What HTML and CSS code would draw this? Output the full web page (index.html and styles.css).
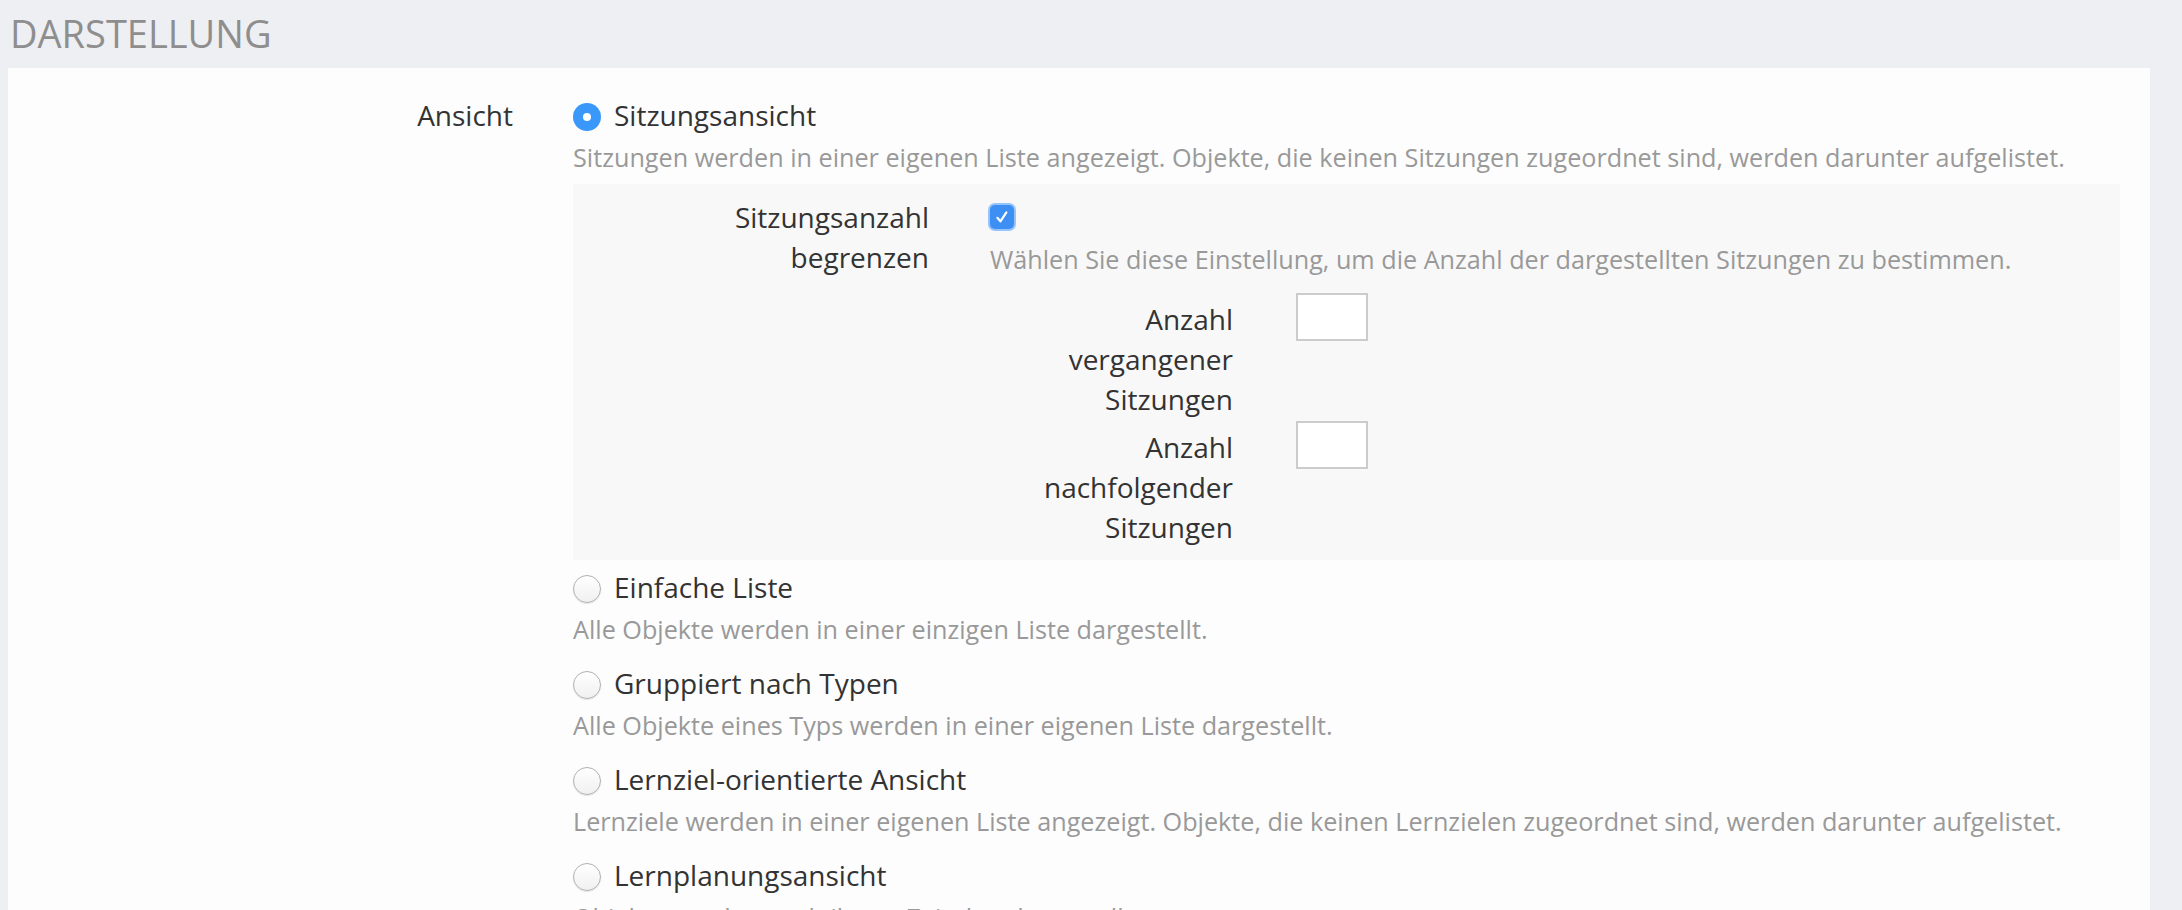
FILE: index.html
```html
<!DOCTYPE html>
<html lang="de">
<head>
<meta charset="utf-8">
<title>Darstellung</title>
<link rel="stylesheet" href="styles.css">
</head>
<body>
<h2 class="section-title">DARSTELLUNG</h2>
<div class="card">
  <div class="form-row">
    <div class="form-label">Ansicht</div>
    <div class="form-controls">
      <div class="option option--expanded">
        <div class="option-head"><span class="radio radio--checked"></span><span class="option-text">Sitzungsansicht</span></div>
        <div class="help">Sitzungen werden in einer eigenen Liste angezeigt. Objekte, die keinen Sitzungen zugeordnet sind, werden darunter aufgelistet.</div>
        <div class="subpanel">
          <div class="sub-label">Sitzungsanzahl begrenzen</div>
          <div class="sub-control">
            <div class="check-line"><span class="checkbox"><svg viewBox="0 0 24 24" width="24" height="24"><path d="M7.4 12.8 L10.4 16.4 L16.4 7.4" fill="none" stroke="#fff" stroke-width="2.2" stroke-linecap="round" stroke-linejoin="round"/></svg></span></div>
            <div class="help">Wählen Sie diese Einstellung, um die Anzahl der dargestellten Sitzungen zu bestimmen.</div>
            <div class="fields">
              <div class="field-label">Anzahl vergangener Sitzungen</div>
              <div class="field-input"><span class="text-input"></span></div>
              <div class="field-label">Anzahl nachfolgender Sitzungen</div>
              <div class="field-input"><span class="text-input"></span></div>
            </div>
          </div>
        </div>
      </div>
      <div class="option">
        <div class="option-head"><span class="radio"></span><span class="option-text">Einfache Liste</span></div>
        <div class="help">Alle Objekte werden in einer einzigen Liste dargestellt.</div>
      </div>
      <div class="option">
        <div class="option-head"><span class="radio"></span><span class="option-text">Gruppiert nach Typen</span></div>
        <div class="help">Alle Objekte eines Typs werden in einer eigenen Liste dargestellt.</div>
      </div>
      <div class="option">
        <div class="option-head"><span class="radio"></span><span class="option-text">Lernziel-orientierte Ansicht</span></div>
        <div class="help">Lernziele werden in einer eigenen Liste angezeigt. Objekte, die keinen Lernzielen zugeordnet sind, werden darunter aufgelistet.</div>
      </div>
      <div class="option">
        <div class="option-head"><span class="radio"></span><span class="option-text">Lernplanungsansicht</span></div>
        <div class="help">Objekte werden nach ihrem Zeitplan dargestellt.</div>
      </div>
    </div>
  </div>
</div>
</body>
</html>
```

FILE: styles.css
```css
html, body {
  margin: 0;
  padding: 0;
}
body {
  background: #eeeff3;
  font-family: "Open Sans", "Noto Sans", sans-serif;
  color: #333333;
  overflow: hidden;
}
.section-title {
  margin: 0 0 15px 0;
  padding: 13px 0 0 10px;
  font-size: 38px;
  line-height: 40px;
  font-weight: 400;
  color: #8e8e8e;
}
.card {
  margin: 0 32px 0 8px;
  padding: 27px 30px 0 0;
  background: #fdfdfd;
  height: 900px;
  box-sizing: border-box;
}
.form-row {
  display: grid;
  grid-template-columns: 505px 1fr;
  column-gap: 60px;
}
.form-label {
  text-align: right;
  font-size: 28px;
  line-height: 40px;
}
.option {
  padding-bottom: 14px;
}
.option--expanded {
  padding-bottom: 7px;
}
.option-head {
  display: flex;
  align-items: flex-start;
  font-size: 28px;
  line-height: 40px;
}
.option-text {
  margin-left: 13px;
}
.radio {
  flex: none;
  width: 28px;
  height: 28px;
  margin-top: 8px;
  border-radius: 50%;
  box-sizing: border-box;
  border: 1px solid #b0b0b0;
  background: linear-gradient(#ffffff, #f0f0f0);
  box-shadow: inset 0 1px 1px rgba(255,255,255,0.8), 0 1px 1px rgba(0,0,0,0.1);
  display: flex;
  align-items: center;
  justify-content: center;
}
.radio--checked {
  border: none;
  background: #3b98fb;
  box-shadow: none;
}
.radio--checked::after {
  content: "";
  width: 8px;
  height: 8px;
  border-radius: 50%;
  background: #ffffff;
}
.help {
  margin-top: 2px;
  font-size: 25.2px;
  line-height: 40px;
  color: #999999;
}
.subpanel {
  margin-top: 7px;
  padding: 13px 0;
  background: #f8f8f8;
  display: grid;
  grid-template-columns: 356px 1fr;
  column-gap: 61px;
}
.sub-label {
  text-align: right;
  padding-left: 56px;
  font-size: 28px;
  line-height: 40px;
}
.check-line {
  height: 40px;
  display: flex;
  align-items: center;
}
.checkbox {
  width: 24px;
  height: 24px;
  border-radius: 5px;
  background: #3d8ff4;
  box-shadow: 0 0 0 2px #94c4fa;
  display: flex;
}
.fields {
  margin-top: 14px;
  display: grid;
  grid-template-columns: 243px 72px;
  column-gap: 63px;
  row-gap: 2px;
}
.field-label {
  padding: 6px 0 0 23px;
  text-align: right;
  font-size: 28px;
  line-height: 40px;
}
.text-input {
  display: block;
  width: 72px;
  height: 48px;
  box-sizing: border-box;
  border: 2px solid #cccccc;
  background: #ffffff;
}
```
